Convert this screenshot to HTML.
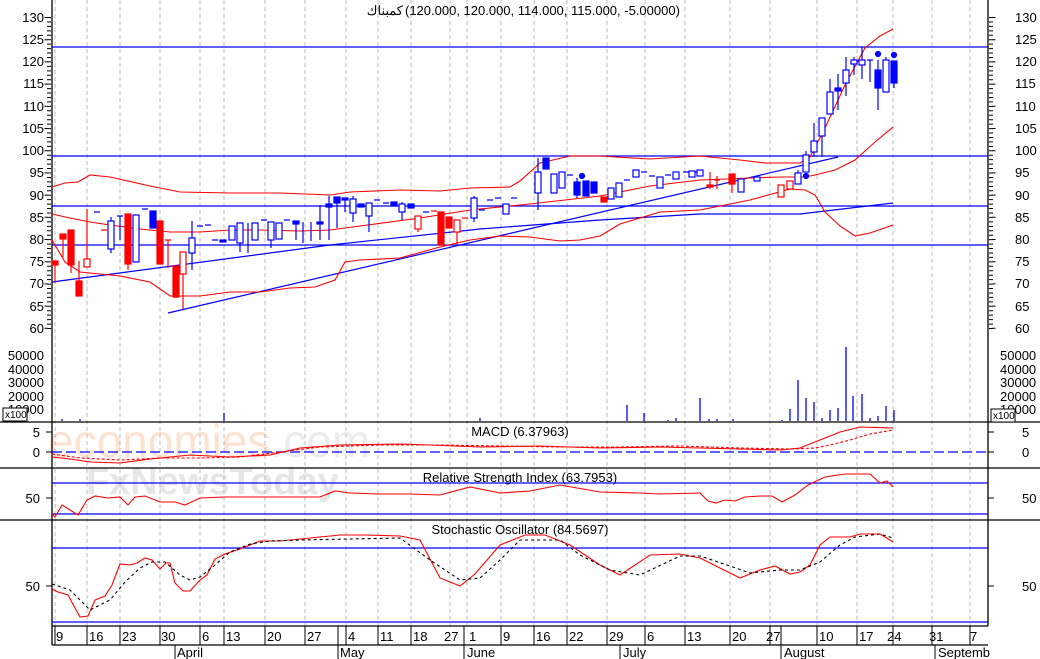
<!DOCTYPE html>
<html><head><meta charset="utf-8"><style>
body{margin:0;background:#fff;width:1040px;height:659px;overflow:hidden}
svg{display:block;font-family:"Liberation Sans","Noto Sans CJK SC",sans-serif}
.t{font-size:13px;fill:#000}
</style></head><body>
<svg width="1040" height="659" viewBox="0 0 1040 659" xmlns="http://www.w3.org/2000/svg">
<rect width="1040" height="659" fill="#fff"/>
<!-- watermark -->
<text x="48" y="457" font-size="46" fill="#fcdcc6" opacity="0.8" font-family="Liberation Sans">economies<tspan fill="#e8e8e8">.com</tspan></text>
<text x="86" y="494" font-size="38" fill="#e6e6e6" font-weight="bold" font-family="Liberation Sans">FxNewsToday</text>
<!-- grid -->
<g stroke="#bbb" stroke-dasharray="4 3" stroke-width="1">
<path d="M55 0V626M87 0V626M120 0V626M160 0V626M200 0V626M224 0V626M265 0V626M305 0V626M346 0V626M378 0V626M411 0V626M450 0V626M467 0V626M501 0V626M534 0V626M567 0V626M607 0V626M645 0V626M685 0V626M730 0V626M770 0V626M817 0V626M857 0V626M893 0V626M932 0V626M970 0V626"/>
</g>
<!-- panel separators -->
<g stroke="#000" stroke-width="1.3">
<path d="M0 422H1040M0 468H1040M0 520H1040M52 626H988M52 645H988"/>
<path d="M52 0V645M988 0V626"/>
</g>
<!-- left/right ticks main -->
<g stroke="#000">
<line x1="49" y1="17" x2="49" y2="330" stroke-width="4" stroke-dasharray="1 3.443"/>
<line x1="991" y1="17" x2="991" y2="330" stroke-width="4" stroke-dasharray="1 3.443"/>
<line x1="46" y1="17" x2="46" y2="330" stroke-width="3" stroke-dasharray="1 21.2"/>
<line x1="994" y1="17" x2="994" y2="330" stroke-width="3" stroke-dasharray="1 21.2"/>
</g>
<g class="t" text-anchor="end">
<text x="44" y="22">130</text><text x="44" y="44">125</text><text x="44" y="66">120</text><text x="44" y="88">115</text><text x="44" y="111">110</text><text x="44" y="133">105</text><text x="44" y="155">100</text><text x="44" y="177">95</text><text x="44" y="200">90</text><text x="44" y="222">85</text><text x="44" y="244">80</text><text x="44" y="266">75</text><text x="44" y="288">70</text><text x="44" y="311">65</text><text x="44" y="333">60</text>
<text x="44" y="360">50000</text><text x="44" y="374">40000</text><text x="44" y="387">30000</text><text x="44" y="401">20000</text><text x="44" y="414">10000</text>
<text x="40" y="437">5</text><text x="40" y="457">0</text><text x="40" y="503">50</text><text x="40" y="591">50</text>
</g>
<g class="t">
<text x="1015" y="22">130</text><text x="1015" y="44">125</text><text x="1015" y="66">120</text><text x="1015" y="88">115</text><text x="1015" y="111">110</text><text x="1015" y="133">105</text><text x="1015" y="155">100</text><text x="1015" y="177">95</text><text x="1015" y="200">90</text><text x="1015" y="222">85</text><text x="1015" y="244">80</text><text x="1015" y="266">75</text><text x="1015" y="288">70</text><text x="1015" y="311">65</text><text x="1015" y="333">60</text>
<text x="1000" y="360">50000</text><text x="1000" y="374">40000</text><text x="1000" y="387">30000</text><text x="1000" y="401">20000</text><text x="1000" y="414">10000</text>
<text x="1022" y="437">5</text><text x="1022" y="457">0</text><text x="1022" y="503">50</text><text x="1022" y="591">50</text>
</g>
<g stroke="#000" stroke-width="1" fill="#fff">
<rect x="3" y="408" width="24" height="13"/><rect x="991" y="409" width="24" height="13"/>
</g>
<text x="5" y="418" font-size="10">x100</text><text x="993" y="419" font-size="10">x100</text>
<!-- titles -->
<text x="403" y="15" class="t" font-size="12" text-anchor="end">كمبناك</text>
<text x="405" y="15" class="t" font-size="12">(120.000, 120.000, 114.000, 115.000, -5.00000)</text>
<text x="520" y="436" class="t" font-size="12" text-anchor="middle">MACD (6.37963)</text>
<text x="520" y="482" class="t" font-size="12" text-anchor="middle">Relative Strength Index (63.7953)</text>
<text x="520" y="534" class="t" font-size="12" text-anchor="middle">Stochastic Oscillator (84.5697)</text>
<!-- horizontal lines main -->
<g stroke="#00f" stroke-width="1.2" fill="none">
<path d="M52 47H988M52 156H988M52 206H988M52 245H988"/>
<path d="M52 282L330 245L480 229L600 220L700 214L800 214L893 203"/>
<path d="M168 313L838 157"/>
<path d="M52 452H988" stroke-dasharray="10 4"/>
<path d="M52 483H988M52 514H988M52 548H988M52 622H988"/>
</g>
<!-- bollinger -->
<g stroke="#f00" stroke-width="1.1" fill="none">
<path d="M52 187L65 183L78 182L90 175L110 177L150 186L180 192L230 193L280 193L330 195L350 192L400 190L440 191L470 188L510 187L520 181L540 163L570 156L600 156L650 159L700 156L740 160L765 163L800 163L810 157L825 128L845 85L865 48L880 36L893 29"/>
<path d="M52 214L70 218L90 222L110 225L140 229L170 232L200 232L230 230L260 230L300 231L330 230L360 226L420 218L470 210L530 204L600 196L650 186L700 180L750 178L780 177L805 177L815 175L835 170L855 160L875 142L893 127"/>
<path d="M52 240L65 262L80 272L120 276L150 282L170 296L200 296L230 292L260 292L290 288L315 287L335 280L345 262L360 260L400 258L440 247L470 240L500 236L530 237L560 241L580 240L600 236L620 224L660 212L700 210L750 200L790 189L805 190L815 195L825 212L840 226L855 236L870 233L893 225"/>
</g>
<!-- candles -->
<g stroke-width="1.2">
<g stroke="#f00" fill="#f00">
<path d="M55 261V283M63 234V257M71 230V273M79 261V296M87 209V267M128 214V270M160 221V264M168 240V268M176 266V298M183 252V309M418 216V232M441 212V245M449 217V228M457 220V245M604 197V202M710 172V189M717 176V189M732 174V193M781 185V197M790 181V189"/>
<rect x="52" y="261" width="6" height="4"/><rect x="60" y="234" width="6" height="5"/><rect x="68" y="230" width="6" height="35"/><rect x="76" y="281" width="6" height="15"/>
<rect x="125" y="214" width="6" height="50"/><rect x="157" y="221" width="6" height="43"/><rect x="173" y="266" width="6" height="31"/>
<rect x="438" y="212" width="6" height="33"/><rect x="446" y="217" width="6" height="11"/><rect x="601" y="197" width="6" height="5"/><rect x="707" y="185" width="6" height="2"/><rect x="729" y="174" width="6" height="10"/>
<path d="M101 230H107M165 240H171M431 211H437M462 218H468M714 180H720"/>
</g>
<g stroke="#f00" fill="#fff">
<rect x="84" y="259" width="6" height="8"/><rect x="180" y="252" width="6" height="22"/><rect x="415" y="216" width="6" height="13"/><rect x="454" y="220" width="6" height="12"/><rect x="778" y="185" width="6" height="12"/><rect x="787" y="181" width="6" height="8"/>
</g>
<g stroke="#00f" fill="#00f">
<path d="M111 217V253M120 216V240M136 215V262M192 221V270M240 223V252M248 223V253M271 222V248M296 221V240M303 222V243M311 222V241M320 205V240M329 196V240M337 197V228M345 198V212M353 196V222M369 203V232M402 202V220M474 196V222M538 158V210M546 158V169M577 178V198M586 181V196M594 182V193M611 188V199M619 183V197M660 177V188M741 179V192M798 170V184M806 151V172M814 123V157M822 118V157M830 79V114M838 74V110M846 57V96M854 57V75M862 47V79M870 60V82M878 60V110M886 57V92M894 61V88"/>
<path d="M94 212H100M117 216H123M142 209H148M197 226H203M205 225H211M212 240H218M261 220H267M284 220H290M374 200H380M383 203H389M423 212H429M479 210H485M487 200H493M495 198H501M511 198H517M567 175H573M624 180H630M641 172H647M649 176H655M665 175H671M683 172H689M691 172H697M867 60H873"/>
<rect x="150" y="211" width="6" height="17"/><rect x="220" y="240" width="6" height="2"/><rect x="293" y="221" width="6" height="3"/><rect x="317" y="222" width="6" height="2"/><rect x="326" y="204" width="6" height="3"/><rect x="334" y="197" width="6" height="6"/><rect x="342" y="198" width="6" height="2"/><rect x="358" y="204" width="6" height="3"/><rect x="391" y="202" width="6" height="4"/><rect x="408" y="204" width="6" height="4"/>
<rect x="543" y="158" width="6" height="11"/><rect x="574" y="182" width="6" height="13"/><rect x="583" y="181" width="6" height="15"/><rect x="591" y="182" width="6" height="11"/><rect x="835" y="88" width="6" height="3"/><rect x="875" y="70" width="6" height="18"/><rect x="891" y="61" width="6" height="22"/>
<circle cx="582" cy="176" r="2.5"/><circle cx="806" cy="176" r="2.5"/><circle cx="878" cy="54" r="2.5"/><circle cx="894" cy="55" r="2.5"/>
</g>
<g stroke="#00f" fill="#fff">
<rect x="108" y="221" width="6" height="28"/><rect x="133" y="215" width="6" height="47"/><rect x="189" y="238" width="6" height="15"/><rect x="229" y="226" width="6" height="14"/><rect x="237" y="223" width="6" height="20"/><rect x="252" y="223" width="6" height="17"/><rect x="268" y="222" width="6" height="18"/><rect x="276" y="223" width="6" height="16"/>
<rect x="350" y="199" width="6" height="14"/><rect x="366" y="203" width="6" height="13"/><rect x="399" y="204" width="6" height="8"/><rect x="471" y="198" width="6" height="20"/><rect x="503" y="204" width="6" height="10"/><rect x="535" y="172" width="6" height="21"/><rect x="551" y="174" width="6" height="19"/><rect x="559" y="172" width="6" height="16"/><rect x="608" y="188" width="6" height="11"/><rect x="616" y="183" width="6" height="14"/><rect x="633" y="170" width="6" height="7"/><rect x="657" y="177" width="6" height="11"/><rect x="673" y="172" width="6" height="7"/><rect x="697" y="170" width="6" height="6"/><rect x="689" y="171" width="6" height="6"/><rect x="738" y="179" width="6" height="13"/><rect x="754" y="177" width="6" height="4"/>
<rect x="795" y="173" width="6" height="11"/><rect x="803" y="155" width="6" height="17"/><rect x="811" y="141" width="6" height="11"/><rect x="819" y="118" width="6" height="18"/><rect x="827" y="92" width="6" height="22"/><rect x="843" y="70" width="6" height="13"/><rect x="851" y="60" width="6" height="4"/><rect x="859" y="60" width="6" height="5"/><rect x="883" y="60" width="6" height="32"/>
</g>
</g>
<!-- volume -->
<g stroke="#00f" stroke-width="1.3">
<path d="M224 421V413M480 421V418M627 421V405M644 421V413M668 421V420M676 421V418M700 421V398M709 421V419M717 421V419M733 421V419M782 421V420M790 421V409M798 421V380M806 421V398M814 421V402M822 421V418M830 421V410M838 421V408M846 421V347M853 421V396M862 421V394M870 421V418M878 421V416M886 421V406M894 421V410M62 421V419M80 421V419"/>
</g>
<!-- MACD -->
<g stroke="#f00" stroke-width="1.1" fill="none">
<path d="M52 457L70 459L90 462L120 463L150 459L190 455L230 457L270 455L300 448L340 445L400 444L430 445L480 447L540 446L600 448L660 447L700 448L740 449L780 450L800 448L820 440L840 432L860 427L893 428"/>
<path d="M52 454L80 458L120 460L160 458L200 458L240 457L280 452L320 447L380 445L440 445L500 446L560 447L620 447L680 446L740 448L790 449L815 448L830 445L850 440L870 434L893 430" stroke-dasharray="3 2"/>
</g>
<!-- RSI -->
<path d="M52 514L55 517L62 505L78 515L87 500L95 496L108 498L120 497L128 505L135 497L145 496L160 502L175 502L185 505L200 498L224 497L265 497L320 497L335 491L350 493L378 494L410 494L440 495L470 487L500 493L530 491L560 485L600 492L640 493L660 494L700 493L708 501L716 503L725 500L735 501L745 497L760 496L772 496L782 502L795 495L808 485L825 477L845 474L870 474L880 483L887 481L893 487" stroke="#f00" stroke-width="1.1" fill="none"/>
<!-- Stoch -->
<path d="M52 589L58 592L68 595L75 608L80 617L88 616L95 600L105 596L112 585L120 564L130 565L137 563L145 558L152 560L160 569L166 563L170 563L175 583L183 591L190 591L200 580L207 575L215 559L225 554L240 549L260 541L280 541L300 539L340 535L365 535L400 536L420 540L440 578L460 586L475 574L500 545L525 535L545 535L570 545L600 565L620 575L650 555L680 554L700 558L720 568L740 578L760 570L775 566L790 574L800 572L810 565L820 545L830 537L850 537L860 534L880 534L885 537L893 542" stroke="#f00" stroke-width="1.1" fill="none"/>
<path d="M52 584L70 590L80 600L90 610L100 605L110 600L125 582L140 568L152 562L165 562L180 575L190 580L200 577L215 565L230 552L250 544L270 541L300 540L400 538L430 560L460 580L480 578L500 560L520 540L560 540L580 555L610 570L640 575L680 556L700 556L730 566L750 573L780 570L800 570L820 562L840 545L855 537L880 534L893 538" stroke="#000" stroke-width="1.1" stroke-dasharray="3 3" fill="none"/>
<!-- side ticks for lower panels -->
<g stroke="#000" stroke-width="1"><path d="M46 432H52M46 452H52M46 498H52M46 586H52M988 432H994M988 452H994M988 498H994M988 586H994"/></g>
<!-- date axis -->
<g stroke="#000" stroke-width="1"><path d="M55 626V645M87 626V645M120 626V645M160 626V645M200 626V645M224 626V645M265 626V645M305 626V645M338 626V659M346 626V645M378 626V645M411 626V645M464 626V659M501 626V645M534 626V645M567 626V645M607 626V645M620 645V659M645 626V645M685 626V645M730 626V645M770 626V645M781 626V659M817 626V645M857 626V645M893 626V645M932 626V645M935 645V659M970 626V645M175 645V659"/></g>
<g class="t">
<text x="56" y="641">9</text><text x="89" y="641">16</text><text x="122" y="641">23</text><text x="161" y="641">30</text><text x="202" y="641">6</text><text x="226" y="641">13</text><text x="267" y="641">20</text><text x="307" y="641">27</text><text x="348" y="641">4</text><text x="380" y="641">11</text><text x="413" y="641">18</text><text x="444" y="641">27</text><text x="469" y="641">1</text><text x="503" y="641">9</text><text x="536" y="641">16</text><text x="569" y="641">22</text><text x="609" y="641">29</text><text x="647" y="641">6</text><text x="687" y="641">13</text><text x="732" y="641">20</text><text x="766" y="641">27</text><text x="819" y="641">10</text><text x="859" y="641">17</text><text x="887" y="641">24</text><text x="929" y="641">31</text><text x="970" y="641">7</text>
<text x="177" y="657">April</text><text x="340" y="657">May</text><text x="467" y="657">June</text><text x="623" y="657">July</text><text x="784" y="657">August</text><text x="938" y="657">Septemb</text>
</g>
</svg>
</body></html>
